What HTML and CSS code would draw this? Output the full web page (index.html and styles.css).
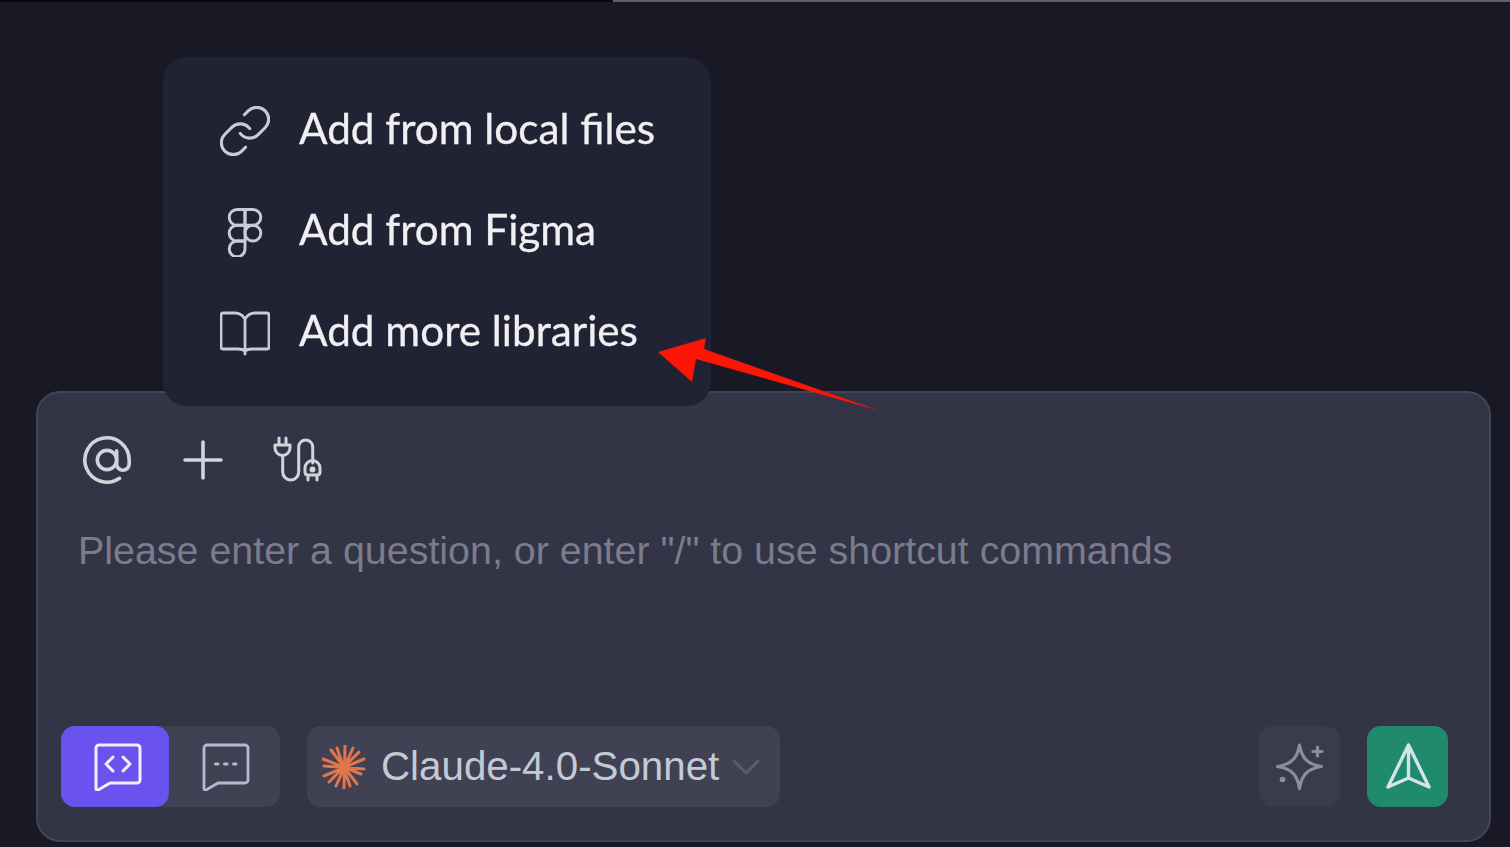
FILE: index.html
```html
<!DOCTYPE html>
<html lang="en">
<head>
<meta charset="utf-8">
<title>Chat input</title>
<link rel="stylesheet" href="styles.css">
</head>
<body>
<div class="topstrip"><div class="topstrip-dark"></div><div class="topstrip-light"></div></div>
<main class="stage">
  <section class="composer">
    <div class="tools">
      <button class="tool at"><svg viewBox="3 3 44 44" width="50" height="50"><circle cx="25" cy="25" r="8.500"/><path d="M33.500 17v11.500a5.500 5.500 0 0 0 11 0V25a19.500 19.500 0 1 0-8.500 16.100"/></svg></button>
      <button class="tool plus"><svg viewBox="0 0 40 40" width="40" height="40"><path d="M20 2v36M2 20h36"/></svg></button>
      <button class="tool plug"><svg viewBox="0 0 50 50" width="50" height="50"><path d="M6 3v7M13 3v7M2 10h15v3a7.500 7.500 0 0 1-15 0z"/><path d="M9.700 20.500V37a8 8 0 0 0 16 0V12a7 7 0 0 1 14 0v16"/><path d="M35 40v5M44 40v5M32 33a7.500 7.500 0 0 1 15 0v4c0 2-1 3-3 3h-9c-2 0-3-1-3-3z"/><circle cx="39.500" cy="34.500" r="1.500"/></svg></button>
    </div>
    <p class="placeholder">Please enter a question, or enter "/" to use shortcut commands</p>
    <div class="footer">
      <div class="mode">
        <button class="mode-btn active"><svg viewBox="0 0 50 48" width="50" height="48"><path d="M6 2h38a3 3 0 0 1 3 3v32a3 3 0 0 1-3 3H17L5 47a1.500 1.500 0 0 1-2-1.500V5a3 3 0 0 1 3-3z"/><path d="M20 14l-7 7 7 7M30 14l7 7-7 7"/></svg></button>
        <button class="mode-btn"><svg viewBox="0 0 50 48" width="50" height="48"><path d="M6 2h38a3 3 0 0 1 3 3v32a3 3 0 0 1-3 3H17L5 47a1.500 1.500 0 0 1-2-1.500V5a3 3 0 0 1 3-3z"/><path class="dots" d="M14.500 21h2.500M23.500 21h2.500M32.500 21h2.500"/></svg></button>
      </div>
      <button class="model">
        <svg class="spark" viewBox="0 0 44 44" width="44" height="44"><path d="M23 1l-1 42M2 21l40 3M9 5l26 34M37 7L7 37M15 3l13 38M2 31l40-17M31 3L14 41M1 14l38 15"/><circle class="core" cx="22" cy="22" r="6"/></svg>
        <span class="model-name">Claude-4.0-Sonnet</span>
        <svg class="chev" viewBox="0 0 28 16" width="28" height="16"><path d="M2 2l12 12L26 2"/></svg>
      </button>
      <div class="spacer"></div>
      <button class="ghost"><svg viewBox="0 0 50 50" width="50" height="50"><path d="M24.500 3c2 12 7 19 22 21.500-15 2.500-20 9-22 22-2-13-7-19.500-22-22 15-2.500 20-9.500 22-21.500z"/><path d="M42.500 5v9M38 9.500h9"/><circle class="fill" cx="7.500" cy="37.500" r="2.800"/></svg></button>
      <button class="send"><svg viewBox="0 0 50 50" width="50" height="50"><path d="M25.500 3L5 45l20.500-9L46 45zM25.500 3v33"/></svg></button>
    </div>
  </section>
  <nav class="menu">
    <a class="item"><svg class="ico-link" viewBox="1.500 1.500 21 21" width="50" height="50"><path d="M10 13a5 5 0 0 0 7.540.54l3-3a5 5 0 0 0-7.070-7.070l-1.720 1.710"/><path d="M14 11a5 5 0 0 0-7.540-.54l-3 3a5 5 0 0 0 7.070 7.070l1.710-1.710"/></svg><span>Add from local files</span></a>
    <a class="item"><svg class="ico-link" viewBox="0.900 0.900 22.200 22.200" width="50" height="50"><path d="M5 5.500A3.500 3.500 0 0 1 8.500 2H12v7H8.500A3.500 3.500 0 0 1 5 5.500z"/><path d="M12 2h3.500a3.500 3.500 0 1 1 0 7H12V2z"/><path d="M12 12.500a3.500 3.500 0 1 1 7 0 3.500 3.500 0 1 1-7 0z"/><path d="M5 19.500A3.500 3.500 0 0 1 8.500 16H12v3.500a3.500 3.500 0 1 1-7 0z"/><path d="M5 12.500A3.500 3.500 0 0 1 8.500 9H12v7H8.500A3.500 3.500 0 0 1 5 12.500z"/></svg><span>Add from Figma</span></a>
    <a class="item"><svg viewBox="0 0 50 50" width="50" height="50"><path d="M25 11c-3-5-6-6-10-6H3a2 2 0 0 0-2 2v32a2 2 0 0 0 2 2h15c4 0 6 1 7 2 1-1 3-2 7-2h15a2 2 0 0 0 2-2V7a2 2 0 0 0-2-2H35c-4 0-7 1-10 6zM25 11v35"/></svg><span>Add more libraries</span></a>
  </nav>
  <svg class="arrow" viewBox="0 0 230 80" width="230" height="80"><path d="M48 0L0 14l34 30 4-23 184 52-176-62z"/></svg>
</main>
</body>
</html>
```
FILE: styles.css
```css
* { box-sizing: border-box; }
html, body { margin: 0; height: 100%; }
body {
  background: #181924;
  overflow: hidden;
  font-family: "Liberation Sans", Arial, sans-serif;
}
button {
  border: 0;
  padding: 0;
  background: none;
  color: inherit;
  font: inherit;
  display: flex;
  align-items: center;
  justify-content: center;
}
svg { fill: none; display: block; stroke-linecap: round; stroke-linejoin: round; }

.topstrip { display: flex; height: 2px; }
.topstrip-dark { width: 613px; background: #07080f; }
.topstrip-light { flex: 1; background: #5f5f63; }

.stage {
  position: relative;
  height: 845px;
  padding: 389px 19px 5px 36px;
  filter: blur(0.6px);
}

.composer {
  height: 451px;
  background: #333446;
  border: 2px solid #42445a;
  border-radius: 24px;
  padding: 40px 41px 33px 23px;
  display: flex;
  flex-direction: column;
}

.tools { display: flex; align-items: center; padding-left: 21px; height: 54px; }
.tool svg { stroke: #d3d3da; stroke-width: 3.200; }
.tool.plus { margin-left: 51px; }
.tool.plus svg { stroke-width: 3.600; }
.tool.plug { margin-left: 50px; }
.tool.plug svg { stroke-width: 3; }

.placeholder {
  margin: 40px 0 0 17px;
  font-size: 39.400px;
  line-height: 46px;
  color: #7b7c8c;
  white-space: nowrap;
  flex: 1;
}

.footer { display: flex; align-items: stretch; height: 81px; }

.mode { display: flex; width: 219px; background: #404152; border-radius: 14px; }
.mode-btn { width: 111px; border-radius: 14px; padding-left: 2px; }
.mode-btn.active { width: 108px; background: #6a52ee; padding-left: 6px; }
.mode-btn svg { stroke: #b5bad0; stroke-width: 2.800; }
.mode-btn.active svg { stroke: #f2effd; stroke-width: 3; }
.mode-btn .dots { stroke-width: 3; }

.model {
  margin-left: 27px;
  width: 473px;
  justify-content: flex-start;
  gap: 15px;
  padding-left: 15px;
  background: #404152;
  border-radius: 14px;
}
.spark { stroke: #e0764a; stroke-width: 3; flex: none; }
.spark .core { fill: #e0764a; stroke: none; }
.model-name { font-size: 40.300px; color: #c3cad6; white-space: nowrap; }
.chev { stroke: #5a5c6e; stroke-width: 3; margin-left: -2px; }

.spacer { flex: 1; }

.ghost { width: 81px; background: #3a3b4c; border-radius: 14px; margin-right: 27px; }
.ghost svg { stroke: #8e8e9a; stroke-width: 3.200; }
.ghost .fill { fill: #8e8e9a; stroke: none; }

.send { width: 81px; background: #1f8a6c; border-radius: 14px; }
.send svg { stroke: #d5e3ea; stroke-width: 3.400; }

.menu {
  position: absolute;
  left: 163px;
  top: 55px;
  width: 548px;
  height: 349px;
  background: #212334;
  border-radius: 24px;
  padding: 23px 0 0 57px;
  display: flex;
  flex-direction: column;
}
.item {
  display: flex;
  align-items: center;
  gap: 29px;
  height: 101px;
  font-family: Lato, "Noto Sans", sans-serif;
  font-size: 42.300px;
  color: #f0f0f3;
  -webkit-text-stroke: 0.3px #f0f0f3;
  white-space: nowrap;
}
.item span { padding-bottom: 6px; }
.item svg { stroke: #c9cbd7; stroke-width: 2.800; flex: none; -webkit-text-stroke: 0; }
.item .ico-link { stroke-width: 1.300; }

.arrow { position: absolute; left: 658px; top: 336px; }
.arrow path { fill: #fb1505; }
```
